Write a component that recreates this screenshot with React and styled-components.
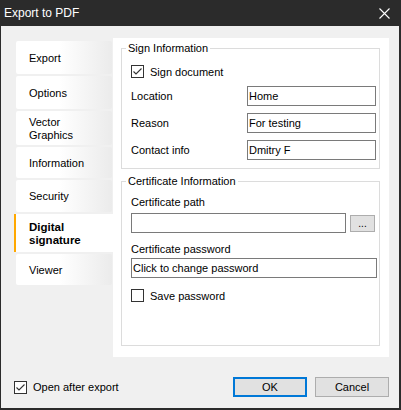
import React from "react";
import styled, { createGlobalStyle } from "styled-components";

const Global = createGlobalStyle`
  html, body { margin: 0; padding: 0; background: #2b2b2b; }
  * { box-sizing: border-box; }
  body { font-family: "Liberation Sans", Arial, sans-serif; font-size: 11px; color: #000; }
`;

const Window = styled.div`
  width: 401px;
  height: 410px;
  background: #2b2b2b;
  padding: 0 2px 2px 1px;
  display: flex;
  flex-direction: column;
`;

const TitleBar = styled.div`
  height: 26px;
  flex: none;
  display: flex;
  align-items: center;
  justify-content: space-between;
  padding: 0 9px 0 3px;
  color: #fff;
  font-family: "Liberation Sans", Arial, sans-serif;
  font-size: 12px;
`;

const Body = styled.div`
  flex: 1;
  background: #f0f0f0;
  padding: 12px 10px 0 12px;
  display: flex;
  flex-direction: column;
`;

const MainRow = styled.div`
  display: flex;
  height: 319px;
`;

const Sidebar = styled.div`
  width: 100px;
  flex: none;
  display: flex;
  flex-direction: column;
  gap: 2px;
  padding: 3px 1px 0 3px;
`;

const Tab = styled.div`
  height: ${(p) => p.$h}px;
  display: flex;
  align-items: center;
  padding-left: 13px;
  padding-top: 1px;
  line-height: 13px;
  font-weight: ${(p) => (p.$active ? "bold" : "normal")};
  font-size: ${(p) => (p.$active ? "11.5px" : "11px")};
  background: ${(p) =>
    p.$active ? "#fff" : "linear-gradient(to right, #ffffff 45%, #ebebeb)"};
  border-left: ${(p) => (p.$active ? "2px solid #ffa800" : "none")};
  margin-left: ${(p) => (p.$active ? "-2px" : "0")};
  margin-right: ${(p) => (p.$active ? "-1px" : "0")};
  border-radius: ${(p) => (p.$active ? "0" : "2px")};
`;

const TabText = styled.span`
  white-space: pre-line;
`;

const Panel = styled.div`
  flex: 1;
  background: #fff;
  padding: 4px 9px 11px 8px;
  display: flex;
  flex-direction: column;
  gap: 6px;
`;

const Group = styled.fieldset`
  margin: 0;
  border: 1px solid #dcdcdc;
  padding: 0 2px 8px 9px;
  display: flex;
  flex-direction: column;
  flex: ${(p) => (p.$grow ? 1 : "none")};
  min-width: 0;
`;

const Legend = styled.legend`
  padding: 0 2px;
  margin-left: -5px;
  line-height: 13px;
  font-size: 11px;
`;

const CheckRow = styled.label`
  display: flex;
  align-items: center;
  gap: 6px;
  height: 13px;
  margin-top: ${(p) => p.$mt || 0}px;
`;

const Box = styled.span`
  width: 13px;
  height: 13px;
  border: 1px solid #333;
  background: #fff;
  display: inline-flex;
  align-items: center;
  justify-content: center;
  flex: none;
`;

const FieldGrid = styled.div`
  display: grid;
  grid-template-columns: 116px 129px;
  row-gap: 7px;
  margin-top: 8px;
  align-items: center;
`;

const Input = styled.div`
  height: ${(p) => p.$h || 20}px;
  border: 1px solid #7a7a7a;
  background: #fff;
  padding: 0 1px;
  display: flex;
  align-items: center;
  width: ${(p) => (p.$w ? p.$w + "px" : "auto")};
  flex: ${(p) => (p.$w ? "none" : 1)};
`;

const Label = styled.div`
  line-height: 13px;
  margin-top: ${(p) => p.$mt || 0}px;
`;

const PathRow = styled.div`
  display: flex;
  align-items: center;
  gap: 4px;
  margin-top: ${(p) => p.$mt || 0}px;
`;

const SmallButton = styled.div`
  width: 25px;
  height: 17px;
  background: #e1e1e1;
  border: 1px solid #adadad;
  display: flex;
  align-items: flex-end;
  justify-content: center;
  line-height: 13px;
  padding-bottom: 1px;
  font-size: 10px;
`;

const BottomBar = styled.div`
  display: flex;
  align-items: center;
  height: 20px;
  margin-top: 20px;
  padding-left: 1px;
`;

const Buttons = styled.div`
  margin-left: auto;
  display: flex;
  gap: 8px;
`;

const Button = styled.div`
  width: 74px;
  height: 20px;
  background: #e1e1e1;
  border: ${(p) => (p.$primary ? "2px solid #0078d7" : "1px solid #adadad")};
  display: flex;
  align-items: center;
  justify-content: center;
`;

const Check = ({ checked }) => (
  <Box>
    {checked && (
      <svg width="11" height="11" viewBox="0 0 11 11">
        <path d="M1.5 5.5 L4 8 L9.5 2.5" fill="none" stroke="#333" strokeWidth="1.1" />
      </svg>
    )}
  </Box>
);

const tabs = [
  { label: "Export", h: 33 },
  { label: "Options", h: 33 },
  { label: "Vector\nGraphics", h: 34 },
  { label: "Information", h: 31 },
  { label: "Security", h: 32 },
  { label: "Digital\nsignature", h: 38, active: true },
  { label: "Viewer", h: 31 },
];

export default function App() {
  return (
    <>
      <Global />
      <Window>
        <TitleBar>
          <span>Export to PDF</span>
          <svg width="11" height="11" viewBox="0 0 11 11">
            <path d="M0.5 0.5 L10.5 10.5 M10.5 0.5 L0.5 10.5" stroke="#fff" strokeWidth="1.1" />
          </svg>
        </TitleBar>
        <Body>
          <MainRow>
            <Sidebar>
              {tabs.map((t) => (
                <Tab key={t.label} $h={t.h} $active={t.active}>
                  <TabText>{t.label}</TabText>
                </Tab>
              ))}
            </Sidebar>
            <Panel>
              <Group>
                <Legend>Sign Information</Legend>
                <CheckRow $mt={10}>
                  <Check checked />
                  <span>Sign document</span>
                </CheckRow>
                <FieldGrid>
                  <Label>Location</Label>
                  <Input>Home</Input>
                  <Label>Reason</Label>
                  <Input>For testing</Input>
                  <Label>Contact info</Label>
                  <Input>Dmitry F</Input>
                </FieldGrid>
              </Group>
              <Group $grow>
                <Legend>Certificate Information</Legend>
                <Label $mt={8}>Certificate path</Label>
                <PathRow $mt={4}>
                  <Input $w={215} />
                  <SmallButton>...</SmallButton>
                </PathRow>
                <Label $mt={10}>Certificate password</Label>
                <PathRow $mt={2}>
                  <Input $w={246}>Click to change password</Input>
                </PathRow>
                <CheckRow $mt={11}>
                  <Check />
                  <span>Save password</span>
                </CheckRow>
              </Group>
            </Panel>
          </MainRow>
          <BottomBar>
            <CheckRow>
              <Check checked />
              <span>Open after export</span>
            </CheckRow>
            <Buttons>
              <Button $primary>OK</Button>
              <Button>Cancel</Button>
            </Buttons>
          </BottomBar>
        </Body>
      </Window>
    </>
  );
}
